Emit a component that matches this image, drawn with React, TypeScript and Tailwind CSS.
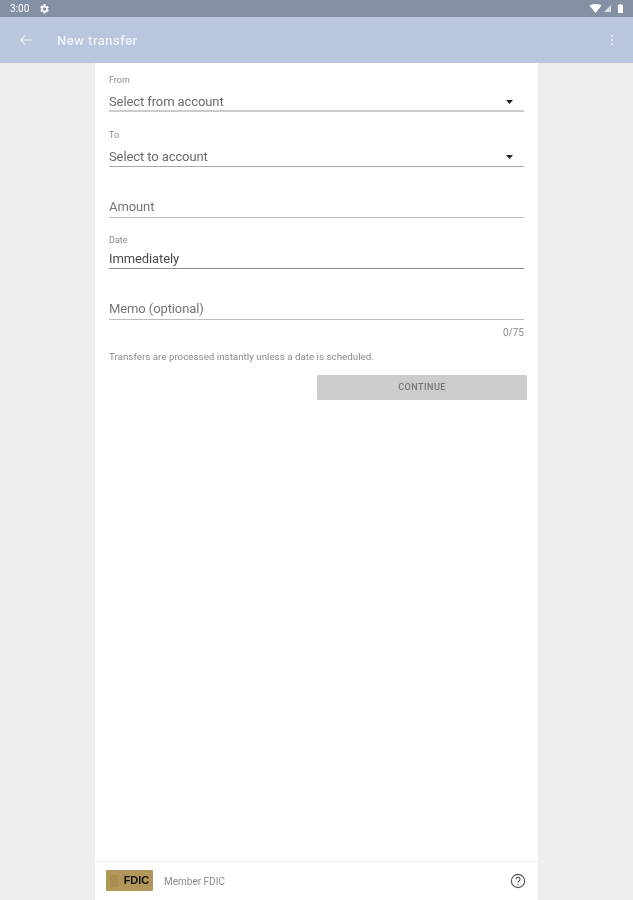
import React from 'react';

const FONT = 'font-["Roboto",sans-serif]';

const Caret = () => (
  <svg width="7" height="4" viewBox="0 0 7 4" className="mr-[11px]">
    <path d="M0 0h7L3.500 4z" fill="#222222" />
  </svg>
);

const Field: React.FC<{
  label?: string;
  value: string;
  caret?: boolean;
  line: string;
  lineH?: string;
  text: string;
  height: string;
  labelGap?: string;
  lineGap?: string;
}> = ({ label, value, caret, line, lineH = 'h-px', text, height, labelGap = 'mb-[8px]', lineGap = 'mt-[1px]' }) => (
  <div className={`flex flex-col justify-end ${height}`}>
    {label && <div className={`text-[9px] leading-[10px] text-[#8a8a8a] ${labelGap}`}>{label}</div>}
    <div className="flex items-center justify-between">
      <span className={`text-[13px] leading-[16px] tracking-[-0.1px] ${text}`}>{value}</span>
      {caret && <Caret />}
    </div>
    <div className={`${lineGap} ${lineH} ${line}`} />
  </div>
);

export default function App() {
  return (
    <div className={`h-[900px] w-[633px] flex flex-col overflow-hidden bg-[#eeeeee] blur-[0.5px] ${FONT}`}>
      {/* barre d'état */}
      <div className="h-[17px] shrink-0 bg-[#8491a5] flex items-center justify-between pl-[10px] pr-[10px]">
        <div className="flex items-center gap-[9px]">
          <span className="text-[10px] leading-none text-white">3:00</span>
          <svg width="12" height="12" viewBox="0 0 24 24" fill="#ffffff">
            <path d="M19.4 13a7.5 7.5 0 0 0 0-2l2.1-1.6-2-3.5-2.5 1a7.5 7.5 0 0 0-1.7-1L15 2.2h-4l-.4 2.7a7.5 7.5 0 0 0-1.7 1l-2.5-1-2 3.5L6.5 11a7.5 7.5 0 0 0 0 2l-2.1 1.6 2 3.5 2.500-1a7.5 7.5 0 0 0 1.7 1l.4 2.7h4l.4-2.7a7.5 7.5 0 0 0 1.7-1l2.5 1 2-3.5zM13 15.5a3.500 3.500 0 1 1 0-7 3.500 3.500 0 0 1 0 7z" />
          </svg>
        </div>
        <div className="flex items-center gap-[2px]">
          <svg width="13" height="9" viewBox="0 0 12 9" fill="#ffffff">
            <path d="M0 1.500C3.500-.5 8.500-.5 12 1.500L6 9z" />
          </svg>
          <svg width="7" height="7" viewBox="0 0 8 8" fill="#ffffff" opacity="0.7">
            <path d="M8 0v8H0z" />
          </svg>
          <svg width="5" height="9" viewBox="0 0 5 9" fill="#ffffff" className="ml-[5px]">
            <path d="M1.500 0h2v1H5v8H0V1h1.500z" />
          </svg>
        </div>
      </div>

      {/* barre d'outils */}
      <div className="h-[46px] shrink-0 bg-[#b8c6de] flex items-center justify-between pl-[19px] pr-[20px]">
        <div className="flex items-center">
          <svg width="14" height="14" viewBox="0 0 24 24" fill="none" stroke="#eef2f8" strokeWidth="2">
            <path d="M22 12H3M11 4l-8 8 8 8" />
          </svg>
          <span className="ml-[24px] mt-[1px] text-[13px] font-medium tracking-[0.5px] text-[#eef2f8]">New transfer</span>
        </div>
        <div className="flex flex-col gap-[2px]">
          <span className="h-[2px] w-[2px] rounded-full bg-[#eef2f8]" />
          <span className="h-[2px] w-[2px] rounded-full bg-[#eef2f8]" />
          <span className="h-[2px] w-[2px] rounded-full bg-[#eef2f8]" />
        </div>
      </div>

      {/* contenu */}
      <div className="mx-auto w-[443px] flex-1 flex flex-col bg-white">
        <div className="flex-1 pl-[14px] pr-[14px] flex flex-col">
          <Field height="h-[49px]" label="From" value="Select from account" caret line="bg-[#cccccc]" lineH="h-[2px]" text="text-[#6a6a6a]" labelGap="mb-[9px]" lineGap="mt-0" />
          <Field height="h-[55px]" label="To" value="Select to account" caret line="bg-[#a8a8a8]" text="text-[#6a6a6a]" labelGap="mb-[9px]" />
          <Field height="h-[51px]" value="Amount" line="bg-[#bdbdbd]" text="text-[#757575]" lineGap="mt-[2px]" />
          <Field height="h-[51px]" label="Date" value="Immediately" line="bg-[#8c8c8c]" text="text-[#4a4a4a]" labelGap="mb-[6px]" />
          <Field height="h-[51px]" value="Memo (optional)" line="bg-[#bdbdbd]" text="text-[#757575]" lineGap="mt-[2px]" />
          <div className="mt-[7px] text-right text-[10px] leading-[12px] text-[#8a8a8a]">0/75</div>
          <div className="mt-[12px] text-[9.800px] leading-[12px] text-[#8a8a8a]">
            Transfers are processed instantly unless a date is scheduled.
          </div>
          <div className="mt-[12px] flex justify-end -mr-[3px]">
            <div className="w-[210px] h-[25px] rounded-[1px] bg-[#cccccc] flex items-center justify-center text-[9px] font-medium tracking-[0.5px] text-[#757575]">
              CONTINUE
            </div>
          </div>
        </div>

        {/* pied de page */}
        <div className="h-[39px] shrink-0 border-t border-[#eeeeee] flex items-center pl-[11px] pr-[12px]">
          <div className="-mt-[1px] h-[21px] w-[47px] rounded-[1px] bg-[#b3975a] flex items-center justify-between pl-[4px] pr-[4px]">
            <span className="h-[12px] w-[8px] rounded-[1px] bg-[#aa8e51]" />
            <span className="font-['Liberation_Sans',sans-serif] text-[11px] font-bold leading-none tracking-[-0.1px] text-[#111111]">FDIC</span>
          </div>
          <span className="ml-[11px] text-[10px] text-[#8a8a8a]">Member FDIC</span>
          <svg className="ml-auto" width="16" height="16" viewBox="0 0 24 24" fill="none" stroke="#555555" strokeWidth="1.700">
            <circle cx="12" cy="12" r="10" />
            <path d="M9 9.500a3 3 0 1 1 4.500 2.600c-1 .6-1.500 1.200-1.500 2.400" />
            <path d="M12 16.500v2" />
          </svg>
        </div>
      </div>
    </div>
  );
}
